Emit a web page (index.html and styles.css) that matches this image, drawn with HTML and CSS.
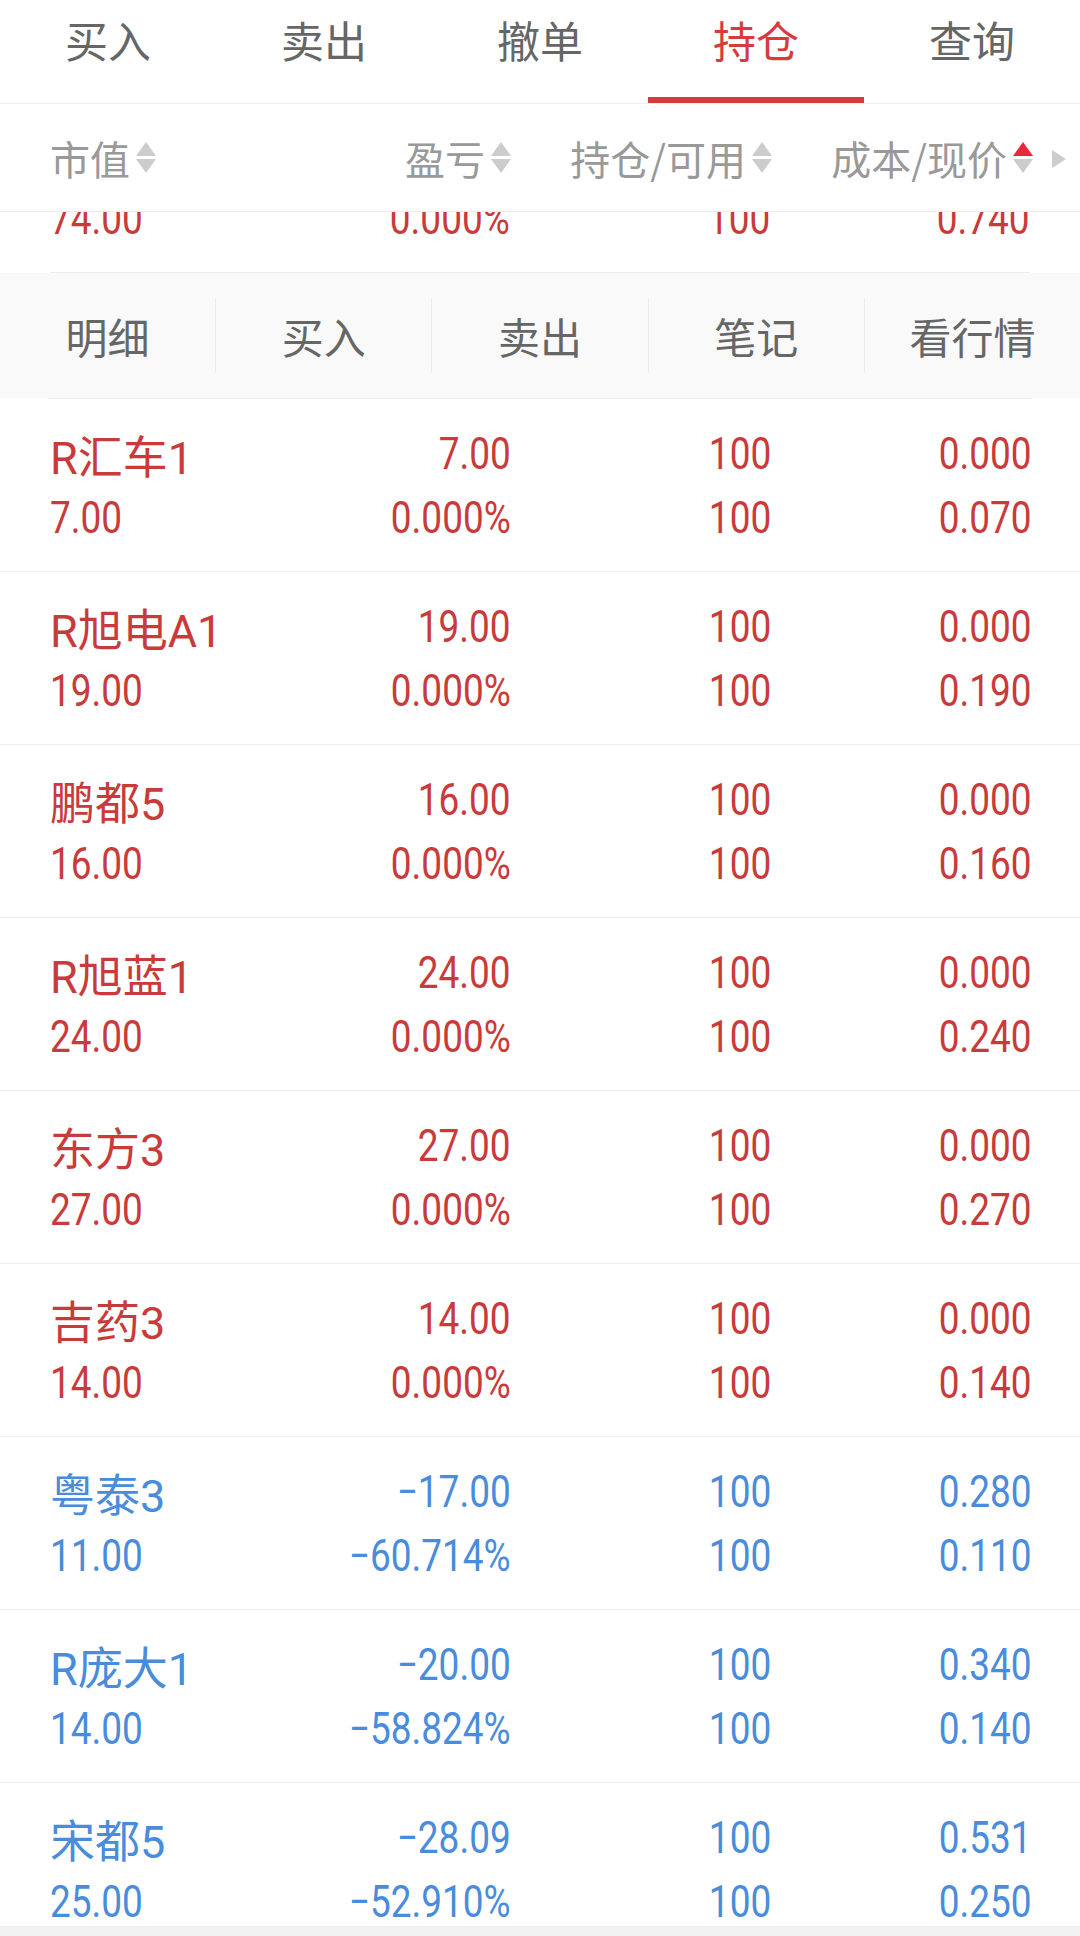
FILE: index.html
```html
<!DOCTYPE html>
<html>
<head>
    <meta charset="utf-8">
    <title>持仓</title>
    <link rel="stylesheet" href="styles.css">
</head>
<body>
    <!-- Trade tabs -->
    <div class="tabs">
        <div class="tab">买入</div>
        <div class="tab">卖出</div>
        <div class="tab">撤单</div>
        <div class="tab active">持仓</div>
        <div class="tab">查询</div>
    </div>

    <!-- Column header -->
    <div class="thead">
        <div class="th left">市值<svg class="sort" viewBox="0 0 20 31"><polygon points="0,14 10,0 20,14"/><polygon points="0,17 20,17 10,31"/></svg></div>
        <div class="th">盈亏<svg class="sort" viewBox="0 0 20 31"><polygon points="0,14 10,0 20,14"/><polygon points="0,17 20,17 10,31"/></svg></div>
        <div class="th">持仓/可用<svg class="sort" viewBox="0 0 20 31"><polygon points="0,14 10,0 20,14"/><polygon points="0,17 20,17 10,31"/></svg></div>
        <div class="th">成本/现价<svg class="sort" viewBox="0 0 20 31"><polygon class="on" points="0,14 10,0 20,14"/><polygon points="0,17 20,17 10,31"/></svg></div>
        <svg class="more" viewBox="0 0 14 18"><polygon points="0,0 14,9 0,18"/></svg>
    </div>

    <div class="list">
        <!-- row scrolled under the header -->
        <div class="row peek up-row">
            <div class="cell left"><span class="num">74.00</span></div>
            <div class="cell"><span class="num">0.000%</span></div>
            <div class="cell"><span class="num">100</span></div>
            <div class="cell"><span class="num">0.740</span></div>
        </div>

        <div class="actions">
            <div class="action">明细</div>
            <div class="action">买入</div>
            <div class="action">卖出</div>
            <div class="action">笔记</div>
            <div class="action">看行情</div>
        </div>

        <div id="rows"></div>
    </div>

    <div class="footer"></div>

    <script>
        // name, pnl, qty, cost / value, pnl %, available, price
        const positions = [
            ['R汇车1', '7.00', '100', '0.000', '7.00', '0.000%', '100', '0.070'],
            ['R旭电A1', '19.00', '100', '0.000', '19.00', '0.000%', '100', '0.190'],
            ['鹏都5', '16.00', '100', '0.000', '16.00', '0.000%', '100', '0.160'],
            ['R旭蓝1', '24.00', '100', '0.000', '24.00', '0.000%', '100', '0.240'],
            ['东方3', '27.00', '100', '0.000', '27.00', '0.000%', '100', '0.270'],
            ['吉药3', '14.00', '100', '0.000', '14.00', '0.000%', '100', '0.140'],
            ['粤泰3', '-17.00', '100', '0.280', '11.00', '-60.714%', '100', '0.110'],
            ['R庞大1', '-20.00', '100', '0.340', '14.00', '-58.824%', '100', '0.140'],
            ['宋都5', '-28.09', '100', '0.531', '25.00', '-52.910%', '100', '0.250']
        ];

        const rows = document.getElementById('rows');
        positions.forEach(p => {
            const row = document.createElement('div');
            row.className = 'row ' + (p[1].startsWith('-') ? 'down-row' : 'up-row');
            row.innerHTML = p.map((v, i) => {
                const cls = i % 4 === 0 ? 'cell left' : 'cell';
                // show a real minus sign for losses
                const shown = v.replace(/^-/, '\u2212');
                const text = i === 0 ? `<span class="name">${v}</span>` : `<span class="num">${shown}</span>`;
                return `<div class="${cls}">${text}</div>`;
            }).join('');
            rows.appendChild(row);
        });
    </script>
</body>
</html>
```

FILE: styles.css
```css
body {
    margin: 0;
    width: 1080px;
    height: 1936px;
    display: flex;
    flex-direction: column;
    background-color: #fff;
    font-family: "Noto Sans CJK SC", sans-serif;
    overflow: hidden;
}

/* Top tabs */
.tabs {
    display: flex;
    height: 103px;
    border-bottom: 1px solid #eeeeee;
    flex-shrink: 0;
}

.tab {
    position: relative;
    flex: 1;
    text-align: center;
    font-size: 43px;
    line-height: 78px;
    color: #666;
}

.tab.active {
    color: #d63b3d;
}

.tab.active::after {
    content: "";
    position: absolute;
    left: 0;
    right: 0;
    bottom: 0;
    height: 6px;
    background-color: #d43c3c;
}

/* Column header */
.thead {
    position: relative;
    display: grid;
    grid-template-columns: 200px repeat(3, 1fr);
    align-items: center;
    height: 107px;
    padding: 0 47px 0 50px;
    border-bottom: 1px solid #ececec;
    flex-shrink: 0;
    z-index: 1;
    background-color: #fff;
}

.th {
    display: flex;
    align-items: center;
    justify-content: flex-end;
    gap: 6px;
    font-size: 40px;
    color: #999;
}

.th.left {
    justify-content: flex-start;
}

.sort {
    width: 20px;
    height: 31px;
    flex-shrink: 0;
    fill: #cccccc;
}

.sort .on {
    fill: #e8283a;
}

.more {
    position: absolute;
    right: 14px;
    top: 46px;
    width: 14px;
    height: 18px;
    fill: #cccccc;
}

/* Position list */
.list {
    flex: 1;
    overflow: hidden;
}

.row {
    display: grid;
    grid-template-columns: 200px repeat(3, 1fr);
    grid-auto-rows: 64px;
    align-items: center;
    align-content: center;
    height: 170px;
    padding: 2px 48px 0 50px;
    border-bottom: 1px solid #eeeeee;
    font-family: Roboto, "Noto Sans CJK SC", sans-serif;
    font-size: 43px;
}

.row.peek {
    margin: -112px 50px 0;
    padding: 87px 0 21px;
    height: 64px;
    align-content: start;
    border-bottom-color: #ececec;
}

.up-row {
    color: #c93a3a;
}

.down-row {
    color: #4a8cdc;
}

.cell {
    text-align: right;
    white-space: nowrap;
}

.cell.left {
    text-align: left;
}

/* narrow digits like the trading font */
.num {
    display: inline-block;
    font-size: 44px;
    transform: scaleX(0.84);
    transform-origin: right center;
}

.cell.left .num {
    transform-origin: left center;
}

.name {
    font-size: 45px;
}

/* Action bar under the selected row */
.actions {
    position: relative;
    display: flex;
    align-items: center;
    height: 125px;
    background-color: #f9f9f9;
}

.actions::after {
    content: "";
    position: absolute;
    left: 48px;
    right: 48px;
    bottom: -1px;
    height: 1px;
    background-color: #ececec;
}

.action {
    flex: 1;
    text-align: center;
    font-size: 42px;
    line-height: 75px;
    color: #666;
    border-left: 1px solid #ececec;
}

.action:first-child {
    border-left: none;
}

#rows {
    margin-top: 1px;
}

.footer {
    height: 10px;
    background-color: #f2f2f2;
    flex-shrink: 0;
}
```
